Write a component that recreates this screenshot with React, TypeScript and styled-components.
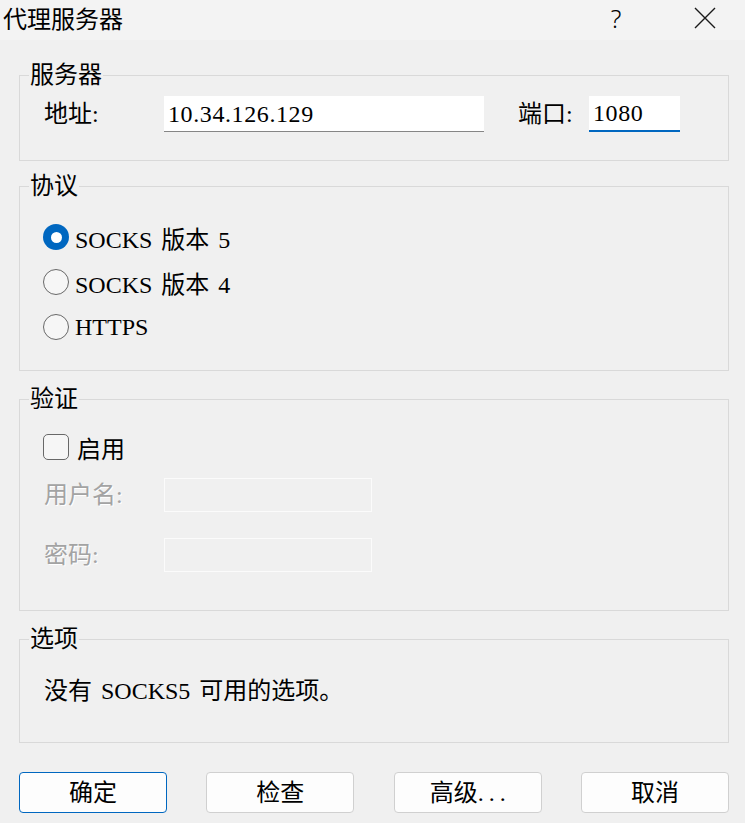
import React from "react";
import styled, { createGlobalStyle } from "styled-components";

const GlobalStyle = createGlobalStyle`
  html, body {
    margin: 0;
    padding: 0;
    background: #f0f0f0;
  }
  * {
    box-sizing: border-box;
  }
`;

const FONT = `"Liberation Serif", "Noto Sans CJK SC", serif`;

const Window = styled.div`
  width: 745px;
  height: 823px;
  background: #f0f0f0;
  display: flex;
  flex-direction: column;
  font-family: ${FONT};
  font-size: 24px;
  color: #000;
  overflow: hidden;
`;

const TitleBar = styled.div`
  height: 40px;
  background: #f3f3f3;
  display: flex;
  align-items: center;
  padding-left: 3px;
  padding-bottom: 4px;
`;

const Title = styled.div`
  flex: 1;
  font-family: "Noto Sans CJK SC", "Noto Sans", sans-serif;
  font-size: 24px;
  line-height: 28px;
`;

const TitleButton = styled.div<{ $w: number }>`
  width: ${(p) => p.$w}px;
  height: 36px;
  display: flex;
  align-items: center;
  justify-content: center;
  font-family: "Noto Sans", sans-serif;
  font-size: 25px;
  font-weight: 300;
`;

const Body = styled.div`
  display: flex;
  flex-direction: column;
  padding: 0 16px 0 19px;
`;

const Group = styled.div<{ $top: number; $h: number }>`
  position: relative;
  margin-top: ${(p) => p.$top}px;
  height: ${(p) => p.$h}px;
  border: 1px solid #d9d9d9;
`;

const Legend = styled.span`
  position: absolute;
  top: -13px;
  left: 9px;
  padding: 0 1px;
  line-height: 24px;
  background: #f0f0f0;
`;

const FieldRow = styled.div<{ $mt: number }>`
  display: flex;
  align-items: center;
  margin-top: ${(p) => p.$mt}px;
  padding-left: 24px;
`;

const Label = styled.span<{ $w: number; $disabled?: boolean }>`
  width: ${(p) => p.$w}px;
  flex-shrink: 0;
  line-height: 28px;
  color: ${(p) => (p.$disabled ? "#a3a3a3" : "#000")};
  text-shadow: ${(p) => (p.$disabled ? "1px 1px 0 #ffffff" : "none")};
`;

const Input = styled.div<{ $w: number; $focused?: boolean }>`
  width: ${(p) => p.$w}px;
  height: 36px;
  background: #fff;
  border-bottom: ${(p) => (p.$focused ? "2px solid #0067c0" : "1px solid #868686")};
  display: flex;
  align-items: center;
  padding-left: 4px;
  line-height: 28px;
  letter-spacing: 0.6px;
`;

const DisabledInput = styled.div`
  width: 208px;
  height: 34px;
  border: 1px solid #fbfbfb;
  background: #f0f0f0;
`;

const RadioRow = styled.div<{ $mt: number }>`
  display: flex;
  align-items: center;
  gap: 6px;
  height: 28px;
  margin-top: ${(p) => p.$mt}px;
  padding-left: 23px;
  word-spacing: 3px;
`;

const Radio = styled.span<{ $checked?: boolean }>`
  width: 26px;
  height: 26px;
  border-radius: 50%;
  flex-shrink: 0;
  display: flex;
  align-items: center;
  justify-content: center;
  background: ${(p) => (p.$checked ? "#0067c0" : "#f6f6f6")};
  border: ${(p) => (p.$checked ? "none" : "1.5px solid #686868")};
  &::after {
    content: "";
    display: ${(p) => (p.$checked ? "block" : "none")};
    width: 11px;
    height: 11px;
    border-radius: 50%;
    background: #fff;
  }
`;

const CheckRow = styled.div`
  display: flex;
  align-items: center;
  gap: 8px;
  margin-top: 34px;
  padding-left: 23px;
  height: 26px;
`;

const Checkbox = styled.span`
  width: 26px;
  height: 26px;
  border-radius: 5px;
  border: 1.5px solid #686868;
  background: #f6f6f6;
  flex-shrink: 0;
`;

const Note = styled.div`
  margin-top: 38px;
  padding-left: 24px;
  line-height: 26px;
  word-spacing: 3px;
`;

const ButtonRow = styled.div`
  display: flex;
  justify-content: space-between;
  margin-top: 29px;
`;

const Button = styled.div<{ $primary?: boolean }>`
  width: 148px;
  height: 41px;
  background: #fdfdfd;
  border: 1px solid ${(p) => (p.$primary ? "#0067c0" : "#d0d0d0")};
  border-radius: 4px;
  display: flex;
  align-items: center;
  justify-content: center;
  line-height: 28px;
`;

const Dots = styled.span`
  letter-spacing: 5px;
  margin-right: -5px;
`;

const CloseIcon = () => (
  <svg width="22" height="22" viewBox="0 0 22 22" fill="none">
    <path d="M1 1 L21 21 M21 1 L1 21" stroke="#1a1a1a" strokeWidth="1.4" />
  </svg>
);

export default function App() {
  return (
    <>
      <GlobalStyle />
      <Window>
        <TitleBar>
          <Title>代理服务器</Title>
          <TitleButton $w={30}>?</TitleButton>
          <TitleButton $w={54} />
          <TitleButton $w={40}>
            <CloseIcon />
          </TitleButton>
          <TitleButton $w={20} />
        </TitleBar>

        <Body>
          <Group $top={35} $h={86}>
            <Legend>服务器</Legend>
            <FieldRow $mt={20}>
              <Label $w={120}>地址:</Label>
              <Input $w={320}>10.34.126.129</Input>
              <Label $w={71} style={{ marginLeft: 34 }}>
                端口:
              </Label>
              <Input $w={91} $focused>
                1080
              </Input>
            </FieldRow>
          </Group>

          <Group $top={25} $h={185}>
            <Legend>协议</Legend>
            <RadioRow $mt={36}>
              <Radio $checked />
              <span>SOCKS 版本 5</span>
            </RadioRow>
            <RadioRow $mt={17}>
              <Radio />
              <span>SOCKS 版本 4</span>
            </RadioRow>
            <RadioRow $mt={17}>
              <Radio />
              <span>HTTPS</span>
            </RadioRow>
          </Group>

          <Group $top={28} $h={212}>
            <Legend>验证</Legend>
            <CheckRow>
              <Checkbox />
              <span>启用</span>
            </CheckRow>
            <FieldRow $mt={18}>
              <Label $w={120} $disabled>
                用户名:
              </Label>
              <DisabledInput />
            </FieldRow>
            <FieldRow $mt={26}>
              <Label $w={120} $disabled>
                密码:
              </Label>
              <DisabledInput />
            </FieldRow>
          </Group>

          <Group $top={28} $h={104}>
            <Legend>选项</Legend>
            <Note>没有 SOCKS5 可用的选项。</Note>
          </Group>

          <ButtonRow>
            <Button $primary>确定</Button>
            <Button>检查</Button>
            <Button>
              高级<Dots>...</Dots>
            </Button>
            <Button>取消</Button>
          </ButtonRow>
        </Body>
      </Window>
    </>
  );
}
